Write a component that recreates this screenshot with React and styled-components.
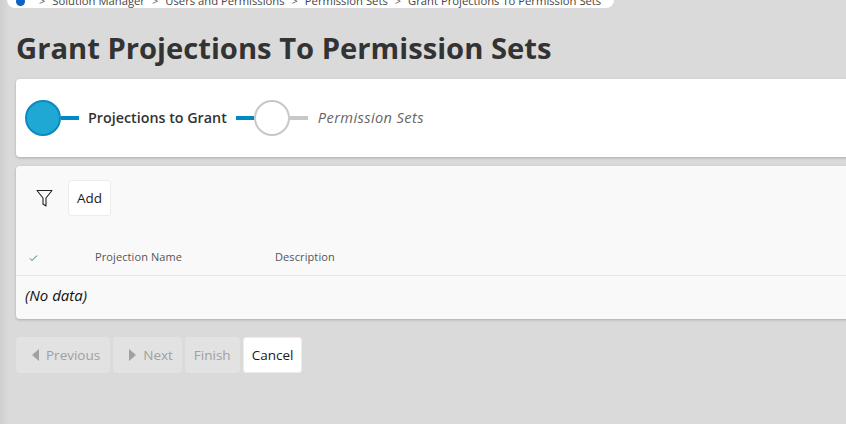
import React from 'react'
import styled, { createGlobalStyle } from 'styled-components'

const Global = createGlobalStyle`
  html, body { margin: 0; padding: 0; height: 100%; overflow: hidden; }
  body { background: #dadada; font-family: "Open Sans", sans-serif; }
  * { box-sizing: border-box; }
`

const Page = styled.div`
  width: 846px;
  height: 424px;
  overflow: hidden;
  padding-left: 16px;
  background: linear-gradient(to right, #cfcfcf 0, #dadada 9px);
`

const Breadcrumb = styled.nav`
  width: 607px;
  height: 8px;
  margin-left: -9px;
  background: #fff;
  border-radius: 0 0 10px 10px;
  overflow: hidden;
  display: flex;
  align-items: center;
  padding-left: 9px;
  font-size: 11.25px;
  color: #444;
  white-space: nowrap;
`

const Crumbs = styled.div`
  display: flex;
  align-items: center;
  gap: 7px;
  height: 16px;
  margin-top: -8px;
  flex: none;
`

const HomeDot = styled.span`
  width: 9px;
  height: 9px;
  margin-right: 7px;
  margin-top: 2px;
  border-radius: 50%;
  background: #0b63c5;
`

const Sep = styled.span`
  font-size: 11px;
  color: #555;
`

const Title = styled.h1`
  margin: 20px 0 0;
  height: 51px;
  font-size: 29.2px;
  line-height: 40px;
  font-weight: 700;
  color: #333;
`

const Card = styled.section`
  width: 840px;
  background: ${p => p.$muted ? '#f9f9f9' : '#fff'};
  border-radius: 4px;
  box-shadow: 0 1px 3px rgba(0, 0, 0, 0.22);
`

const StepCard = styled(Card)`
  height: 78px;
  display: flex;
  align-items: center;
  padding-left: 9px;
  margin-bottom: 9px;
`

const Circle = styled.span`
  flex: none;
  width: 36px;
  height: 36px;
  border-radius: 50%;
  border: 2px solid ${p => p.$active ? '#0a8ac0' : '#c8c8c8'};
  background: ${p => p.$active ? '#1fa8d3' : '#fff'};
`

const Line = styled.span`
  flex: none;
  width: 18px;
  height: 4px;
  background: ${p => p.$active ? '#0089c4' : '#c8c8c8'};
`

const StepLabel = styled.span`
  flex: none;
  margin: 0 9px 2px ${p => p.$active ? 9 : 10}px;
  font-size: ${p => p.$active ? 14.3 : 14.6}px;
  letter-spacing: ${p => p.$active ? 0 : 0.4}px;
  font-weight: ${p => p.$active ? 600 : 400};
  font-style: ${p => p.$active ? 'normal' : 'italic'};
  color: ${p => p.$active ? '#333' : '#666'};
`

const Toolbar = styled.div`
  height: 72px;
  display: flex;
  align-items: center;
  padding: 0 0 8px 20px;
  gap: 15px;
`

const FilterIcon = styled.svg`
  width: 17px;
  height: 18px;
  flex: none;
`

const Button = styled.button`
  height: 36px;
  padding: 0 ${p => p.$right || 8}px 1px ${p => p.$left || 8}px;
  display: inline-flex;
  align-items: center;
  gap: 7px;
  border: 1px solid ${p => p.disabled ? '#e2e2e2' : '#ececec'};
  border-radius: 3px;
  background: ${p => p.disabled ? '#e2e2e2' : '#fff'};
  color: ${p => p.disabled ? '#a0a0a0' : '#1a1a1a'};
  font-family: "Open Sans", sans-serif;
  font-size: 13.5px;
`

const HeaderRow = styled.div`
  height: 38px;
  display: flex;
  align-items: center;
  border-bottom: 1px solid #e6e6e6;
  font-size: 11px;
  color: #555;
  letter-spacing: 0.1px;
`

const CheckCell = styled.div`
  width: 79px;
  padding: 3px 0 0 13px;
  display: flex;
  align-items: center;
`

const NameCell = styled.div`
  width: 180px;
`

const NoData = styled.div`
  height: 43px;
  display: flex;
  align-items: center;
  padding: 0 0 5px 9px;
  font-size: 15px;
  font-style: italic;
  color: #111;
`

const Actions = styled.div`
  display: flex;
  gap: 3px;
  margin-top: 18px;
`

const Tri = styled.svg`
  width: 7px;
  height: 12px;
  flex: none;
`

export default function App() {
  return (
    <Page>
      <Global />
      <Breadcrumb>
        <Crumbs>
          <HomeDot />
          <Sep>&gt;</Sep>
          <span>Solution Manager</span>
          <Sep>&gt;</Sep>
          <span>Users and Permissions</span>
          <Sep>&gt;</Sep>
          <span>Permission Sets</span>
          <Sep>&gt;</Sep>
          <span>Grant Projections To Permission Sets</span>
        </Crumbs>
      </Breadcrumb>
      <Title>Grant Projections To Permission Sets</Title>
      <StepCard>
        <Circle $active />
        <Line $active />
        <StepLabel $active>Projections to Grant</StepLabel>
        <Line $active />
        <Circle />
        <Line />
        <StepLabel>Permission Sets</StepLabel>
      </StepCard>
      <Card $muted>
        <Toolbar>
          <FilterIcon viewBox="0 0 17 18" fill="none" stroke="#222" strokeWidth="1.1" strokeLinejoin="round">
            <path d="M1 1.5h15l-6 7.5v8l-3-2V9z" />
          </FilterIcon>
          <Button>Add</Button>
        </Toolbar>
        <HeaderRow>
          <CheckCell>
            <svg width="9" height="8" viewBox="0 0 9 8" fill="none" stroke="#3f7a55" strokeWidth="1">
              <path d="M1 4.5l2 2 5-5" />
            </svg>
          </CheckCell>
          <NameCell>Projection Name</NameCell>
          <div>Description</div>
        </HeaderRow>
        <NoData>(No data)</NoData>
      </Card>
      <Actions>
        <Button disabled $left={15} $right={9}>
          <Tri viewBox="0 0 7 12"><path d="M7 0v12L0 6z" fill="#a0a0a0" /></Tri>
          Previous
        </Button>
        <Button disabled $left={15} $right={8}>
          <Tri viewBox="0 0 7 12"><path d="M0 0v12l7-6z" fill="#a0a0a0" /></Tri>
          Next
        </Button>
        <Button disabled>Finish</Button>
        <Button>Cancel</Button>
      </Actions>
    </Page>
  )
}
